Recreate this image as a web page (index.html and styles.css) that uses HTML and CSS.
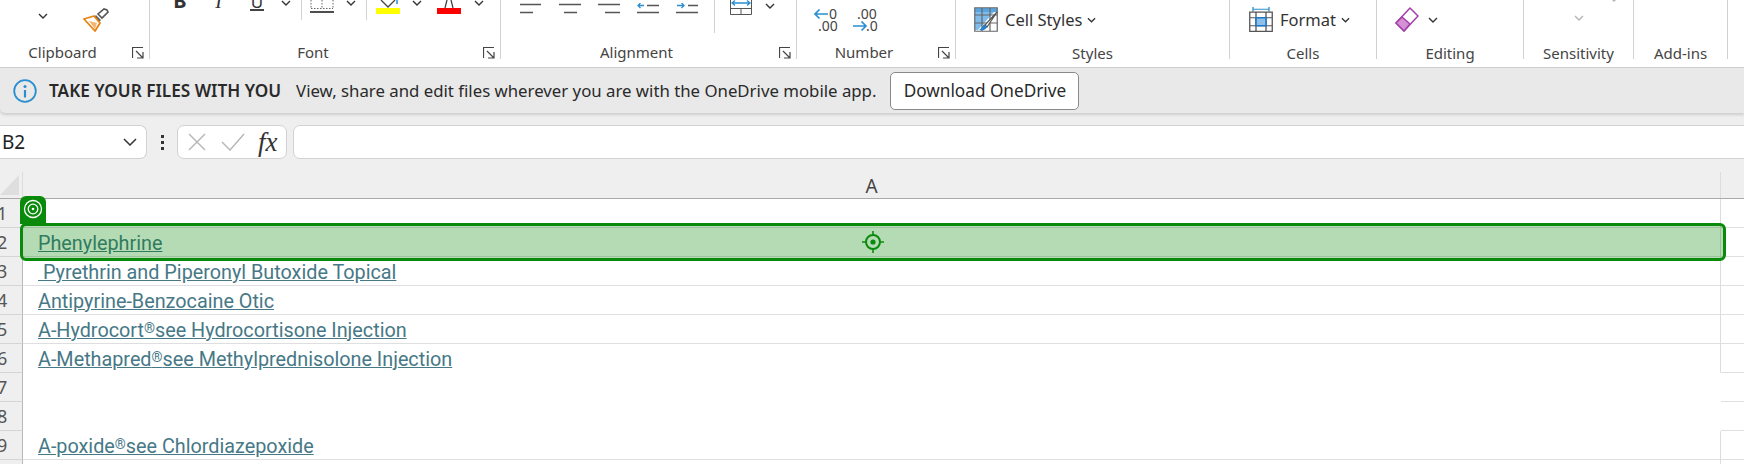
FILE: index.html
```html
<!DOCTYPE html>
<html lang="en">
<head>
    <meta charset="UTF-8">
    <title>Book1 - Excel</title>
    <link rel="stylesheet" href="styles.css">
</head>
<body>
<div class="ribbon">
    <div class="group clipboard">
        <div class="tools">
            <svg class="chev" viewBox="0 0 10 6"><path d="M1 1l4 4 4-4"/></svg>
            <svg class="brush" viewBox="0 0 26 24">
                <path d="M15 6l4 4 6-6-1-2-3-1z" fill="#fff" stroke="#555" stroke-width="1.6"/>
                <path d="M13 7l5 5-2 2-5-5z" fill="#666"/>
                <path d="M1 11l10-3 6 7-5 8z" fill="#fff" stroke="#e8830f" stroke-width="1.8" stroke-linejoin="round"/>
                <path d="M6 13l8 2-2 6z" fill="#f3b56f"/>
            </svg>
        </div>
        <div class="label-row"><span class="label">Clipboard</span><span class="launch"><svg viewBox="0 0 12 12"><path d="M.5 11V.5H11M4 4l7 7M11 5v6H5"/></svg></span></div>
    </div>
    <div class="group font">
        <div class="tools">
            <span class="cut bold">B</span>
            <span class="cut ital">I</span>
            <span class="cut under">U</span>
            <svg class="chev up" viewBox="0 0 10 6"><path d="M1 1l4 4 4-4"/></svg>
            <i class="sep"></i>
            <svg class="borders" viewBox="0 0 24 14"><path d="M1 0v9M23 0v9M1 8.500h22M12 0v9" stroke="#666" stroke-dasharray="1.500 1.500" fill="none"/><path d="M0 12h24" stroke="#222" stroke-width="1.600"/></svg>
            <svg class="chev up" viewBox="0 0 10 6"><path d="M1 1l4 4 4-4"/></svg>
            <i class="sep"></i>
            <span class="swatch yellow"><svg viewBox="0 0 24 8"><path d="M5 0l7 7 7-7" fill="none" stroke="#444" stroke-width="1.300"/><path d="M21 0v4" stroke="#2a8ed0" stroke-width="1.500"/></svg></span>
            <svg class="chev up" viewBox="0 0 10 6"><path d="M1 1l4 4 4-4"/></svg>
            <span class="swatch red"><svg viewBox="0 0 24 8"><path d="M8 8l2-8M16 8l-2-8" fill="none" stroke="#444" stroke-width="1.300"/></svg></span>
            <svg class="chev up" viewBox="0 0 10 6"><path d="M1 1l4 4 4-4"/></svg>
        </div>
        <div class="label-row"><span class="label">Font</span><span class="launch"><svg viewBox="0 0 12 12"><path d="M.5 11V.5H11M4 4l7 7M11 5v6H5"/></svg></span></div>
    </div>
    <div class="group alignment">
        <div class="tools">
            <svg class="lines" viewBox="0 0 22 11"><path d="M0 1.500h21M0 9.500h13"/></svg>
            <svg class="lines" viewBox="0 0 22 11"><path d="M0 1.500h22M5 9.500h13"/></svg>
            <svg class="lines" viewBox="0 0 22 11"><path d="M0 1.500h22M7 9.500h15"/></svg>
            <svg class="lines" viewBox="0 0 22 11"><path d="M10 2.500h12M0 9.500h22"/><path class="blue" d="M7 2.500H1M3.500 0L1 2.500 3.500 5"/></svg>
            <svg class="lines" viewBox="0 0 22 11"><path d="M12 2.500h10M0 9.500h22"/><path class="blue" d="M1 2.500h7M5.500 0L8 2.500 5.500 5"/></svg>
            <i class="sep tall"></i>
            <svg class="merge" viewBox="0 0 22 15"><path d="M.5 0v14.500h21V0M.5 8.500h21M11 8.500v6" fill="none" stroke="#555"/><path d="M2 3h18M5 .5L2 3l3 2.500M17 .5L20 3l-3 2.500" fill="none" stroke="#2a8ed0" stroke-width="1.300"/></svg>
            <svg class="chev up" viewBox="0 0 10 6"><path d="M1 1l4 4 4-4"/></svg>
        </div>
        <div class="label-row"><span class="label">Alignment</span><span class="launch"><svg viewBox="0 0 12 12"><path d="M.5 11V.5H11M4 4l7 7M11 5v6H5"/></svg></span></div>
    </div>
    <div class="group number">
        <div class="tools">
            <svg class="dec" viewBox="0 0 26 26"><path d="M15 6H2M6.500 1.500L2 6l4.500 4.500" fill="none" stroke="#2a8ed0" stroke-width="1.700"/><text x="16" y="10.500">0</text><text x="5" y="23">.00</text></svg>
            <svg class="dec" viewBox="0 0 26 26"><text x="4" y="10.500">.00</text><path d="M0 18h13M8.500 13.500L13 18l-4.500 4.500" fill="none" stroke="#2a8ed0" stroke-width="1.700"/><text x="13" y="23">.0</text></svg>
        </div>
        <div class="label-row"><span class="label">Number</span><span class="launch"><svg viewBox="0 0 12 12"><path d="M.5 11V.5H11M4 4l7 7M11 5v6H5"/></svg></span></div>
    </div>
    <div class="group styles">
        <div class="tools">
            <svg class="big" viewBox="0 0 24 25">
                <path d="M1 1h22v4H1z" fill="#5aa5e0"/>
                <path d="M1 5h19L4 23H1z" fill="#7fbcec"/>
                <path d="M.75.75h22.500v23.500H.75zM1 8h22M1 16h22M8 1v23M16 1v23" fill="none" stroke="#666" stroke-width="1.200"/>
                <path d="M23 5L11 18l2 2z" fill="#fff" stroke="#555" stroke-width="1.200"/>
                <path d="M10 17l3 3c-1 3-5 4-8 3 2-1 3-3 5-6z" fill="#2a80c8"/>
            </svg>
            <span class="tool-text">Cell Styles</span>
            <svg class="chev small" viewBox="0 0 10 6"><path d="M1 1l4 4 4-4"/></svg>
        </div>
        <div class="label-row"><span class="label wide">Styles</span></div>
    </div>
    <div class="group cells">
        <div class="tools">
            <svg class="big" viewBox="0 0 24 28" preserveAspectRatio="none">
                <path d="M4 2.500h16M4 0v5M20 0v5" fill="none" stroke="#2a8ed0" stroke-width="1.300"/>
                <path d="M.75 5.750h22.500v21.500H.75zM1 12h22M1 21h22M7 6v21M17 6v21" fill="none" stroke="#555" stroke-width="1.300"/>
                <path d="M7 12h10v9H7z" fill="#8ec0ea" stroke="#1f78c1" stroke-width="1.600"/>
            </svg>
            <span class="tool-text">Format</span>
            <svg class="chev small" viewBox="0 0 10 6"><path d="M1 1l4 4 4-4"/></svg>
        </div>
        <div class="label-row"><span class="label wide">Cells</span></div>
    </div>
    <div class="group editing">
        <div class="tools">
            <svg class="big" viewBox="0 0 24 25">
                <path d="M1 16L15 1l8 8L9 24z" fill="#fff" stroke="#a33ea8" stroke-width="1.500" stroke-linejoin="round"/>
                <path d="M1 16l6-6 8 7-6 7z" fill="#d491d6" stroke="#a33ea8" stroke-width="1.500" stroke-linejoin="round"/>
            </svg>
            <svg class="chev dark" viewBox="0 0 10 6"><path d="M1 1l4 4 4-4"/></svg>
        </div>
        <div class="label-row"><span class="label wide">Editing</span></div>
    </div>
    <div class="group sensitivity">
        <div class="tools">
            <svg class="chev grey" viewBox="0 0 10 6"><path d="M1 1l4 4 4-4"/></svg>
            <svg class="chev grey top" viewBox="0 0 10 6"><path d="M1 1l4 4 4-4"/></svg>
        </div>
        <div class="label-row"><span class="label wide">Sensitivity</span></div>
    </div>
    <div class="group addins">
        <div class="tools"></div>
        <div class="label-row"><span class="label wide">Add-ins</span></div>
    </div>
</div>

<div class="notice">
    <svg class="info" viewBox="0 0 24 24"><circle cx="12" cy="12" r="10.800" fill="none" stroke="#2a8ed0" stroke-width="1.800"/><circle cx="12" cy="7.500" r="1.500" fill="#2a8ed0"/><path d="M12 11v7.500" stroke="#2a8ed0" stroke-width="2.200"/></svg>
    <b class="notice-title">TAKE YOUR FILES WITH YOU</b>
    <span class="notice-text">View, share and edit files wherever you are with the OneDrive mobile app.</span>
    <span class="notice-btn">Download OneDrive</span>
</div>

<div class="formula">
    <div class="namebox">
        <span>B2</span>
        <svg viewBox="0 0 14 8"><path d="M1 1l6 6 6-6"/></svg>
    </div>
    <span class="dots"><i></i><i></i><i></i></span>
    <div class="fxbox">
        <svg class="cancel" viewBox="0 0 18 18"><path d="M1 1l16 16M17 1L1 17"/></svg>
        <svg class="enter" viewBox="0 0 24 18"><path d="M1 9l8 8L23 1"/></svg>
        <span class="fx">fx</span>
    </div>
    <div class="input"></div>
</div>

<div class="col-head">
    <div class="corner"><i></i></div>
    <div class="col-a">A</div>
    <div class="col-rest"></div>
</div>

<div class="sheet">
    <div class="row"><div class="num">1</div><div class="cell"></div><div class="rest"></div></div>
    <div class="row"><div class="num">2</div><div class="cell"><a>Phenylephrine</a></div><div class="rest"></div></div>
    <div class="row"><div class="num">3</div><div class="cell"><a> Pyrethrin and Piperonyl Butoxide Topical</a></div><div class="rest"></div></div>
    <div class="row"><div class="num">4</div><div class="cell"><a>Antipyrine-Benzocaine Otic</a></div><div class="rest"></div></div>
    <div class="row"><div class="num">5</div><div class="cell"><a>A-Hydrocort<span class="reg">®</span>see Hydrocortisone Injection</a></div><div class="rest"></div></div>
    <div class="row"><div class="num">6</div><div class="cell open-bottom"><a>A-Methapred<span class="reg">®</span>see Methylprednisolone Injection</a></div><div class="rest"></div></div>
    <div class="row"><div class="num">7</div><div class="cell open-bottom open-right"></div><div class="rest"></div></div>
    <div class="row"><div class="num">8</div><div class="cell open-bottom open-right"></div><div class="rest"></div></div>
    <div class="row"><div class="num">9</div><div class="cell"><a>A-poxide<span class="reg">®</span>see Chlordiazepoxide</a></div><div class="rest"></div></div>
    <div class="row"><div class="num">10</div><div class="cell"></div><div class="rest"></div></div>

    <!-- focus cell overlay -->
    <div class="focus">
        <svg class="target" viewBox="0 0 22 22"><circle cx="11" cy="11" r="7" fill="none" stroke="#0a8a0a" stroke-width="2"/><circle cx="11" cy="11" r="2.600" fill="#0a8a0a"/><path d="M11 0v4M11 18v4M0 11h4M18 11h4" stroke="#0a8a0a" stroke-width="1.600"/></svg>
    </div>
    <div class="focus-tab">
        <svg viewBox="0 0 20 20"><circle cx="10" cy="10" r="8.500" fill="none" stroke="#fff" stroke-width="1.300"/><circle cx="10" cy="10" r="4.800" fill="none" stroke="#fff" stroke-width="1.300"/><circle cx="10" cy="10" r="1.300" fill="#fff"/></svg>
    </div>
</div>
</body>
</html>
```

FILE: styles.css
```css
* {
    margin: 0;
    padding: 0;
    box-sizing: border-box;
}

html, body {
    height: 100%;
    overflow: hidden;
}

body {
    background-color: #efefef;
    font-family: "Noto Sans", sans-serif;
    color: #333;
}

svg {
    display: block;
    flex: none;
}

/* ribbon */
.ribbon {
    height: 68px;
    display: flex;
    background-color: #fff;
    border-bottom: 1px solid #d0d0d0;
}

.group {
    height: 59px;
    display: flex;
    flex-direction: column;
    flex: none;
    border-right: 1px solid #d2d2d2;
}

.tools {
    height: 42px;
    flex: none;
}

.label-row {
    height: 22px;
    display: flex;
    flex: none;
}

.label {
    flex: 1;
    text-align: center;
    font-size: 15px;
    line-height: 20px;
    color: #444;
}

.label.wide {
    line-height: 23px;
}

.launch {
    width: 24px;
    padding: 5px 5px 0 7px;
}

.launch svg {
    width: 12px;
    height: 12px;
    fill: none;
    stroke: #444;
    stroke-width: 1.200;
}

.chev {
    width: 10px;
    height: 6px;
    fill: none;
    stroke: #333;
    stroke-width: 1.400;
}

.chev.up {
    justify-self: center;
    margin-top: 0;
}

.chev.small {
    width: 9px;
    height: 6px;
    margin-left: 5px;
}

.chev.grey {
    stroke: #b5b5b5;
}

.sep {
    display: block;
    justify-self: center;
    width: 1px;
    height: 20px;
    background-color: #d2d2d2;
}

.sep.tall {
    height: 33px;
}

.clipboard {
    width: 150px;
}

.clipboard .tools {
    display: flex;
    padding: 8px 0 0 38px;
    gap: 35px;
}

.clipboard .chev {
    margin-top: 5px;
}

.brush {
    width: 26px;
    height: 24px;
}

.font {
    width: 351px;
}

.font .tools {
    display: grid;
    grid-template-columns: 38px 39px 38px 20px 10px 32px 26px 4px 40px 17px 48px 12px;
    align-items: start;
    padding-left: 11px;
}

.cut {
    height: 11px;
    overflow: hidden;
    display: flex;
    justify-content: center;
    align-items: flex-end;
    font-family: "Liberation Serif", serif;
    font-size: 20px;
    line-height: 14px;
    color: #333;
}

.cut.bold {
    font-family: "Noto Sans", sans-serif;
    font-weight: 700;
    height: 8px;
}

.cut.ital {
    font-style: italic;
    height: 8px;
}

.cut.under {
    font-family: "Noto Sans", sans-serif;
    font-size: 17px;
    border-bottom: 2px solid #444;
    width: 14px;
    justify-self: center;
}

.borders {
    width: 24px;
    height: 14px;
    justify-self: center;
}

.swatch {
    display: block;
    width: 24px;
    height: 14px;
    justify-self: center;
    border-bottom: 6px solid #ff0;
}

.swatch.red {
    border-bottom-color: #f00;
}

.swatch svg {
    width: 24px;
    height: 8px;
}

.alignment {
    width: 296px;
}

.alignment .tools {
    display: flex;
    align-items: flex-start;
    gap: 17px;
    padding: 3px 0 0 19px;
}

.lines {
    width: 22px;
    height: 11px;
    fill: none;
    stroke: #555;
    stroke-width: 1.300;
}

.lines .blue {
    stroke: #2a8ed0;
}

.alignment .sep {
    margin: -3px 0 0 -1px;
}

.merge {
    width: 22px;
    height: 15px;
    margin: -3px 0 0 -2px;
}

.alignment .chev {
    margin-left: -4px;
}

.number {
    width: 159px;
}

.number .tools {
    display: flex;
    gap: 14px;
    padding: 8px 0 0 16px;
}

.dec {
    width: 26px;
    height: 26px;
}

.dec text {
    font-family: "Noto Sans", sans-serif;
    font-size: 14px;
    fill: #444;
}

.styles {
    width: 274px;
}

.styles .tools,
.cells .tools,
.editing .tools {
    display: flex;
    align-items: center;
    height: 42px;
    padding-bottom: 3px;
}

.styles .tools {
    padding-left: 18px;
}

.cells .tools {
    padding-left: 19px;
}

.editing .tools {
    padding-left: 18px;
}

.big {
    width: 24px;
    height: 25px;
}

.tool-text {
    margin-left: 7px;
    font-size: 16.500px;
    color: #333;
}

.cells {
    width: 147px;
}

.editing {
    width: 147px;
}

.editing .chev {
    margin-left: 9px;
}

.sensitivity {
    width: 110px;
}

.sensitivity .tools {
    display: flex;
    align-items: flex-start;
    gap: 25px;
    padding: 15px 0 0 50px;
}

.chev.top {
    margin-top: -19px;
}

.addins {
    width: 94px;
}

/* onedrive notice */
.notice {
    height: 45px;
    display: flex;
    align-items: center;
    padding-left: 13px;
    background-color: #e9e9e9;
    border-radius: 0 0 0 5px;
    box-shadow: 0 2px 3px rgba(0, 0, 0, 0.14);
    position: relative;
    font-size: 16.800px;
    color: #2a2a2a;
}

.info {
    width: 24px;
    height: 24px;
}

.notice-title {
    margin-left: 12px;
    font-size: 17.200px;
    font-weight: 600;
}

.notice-text {
    margin-left: 15px;
}

.notice-btn {
    margin-left: 14px;
    width: 189px;
    height: 38px;
    line-height: 35px;
    text-align: center;
    font-size: 17.200px;
    background-color: #fff;
    border: 1px solid #8a8a8a;
    border-radius: 5px;
}

/* formula bar */
.formula {
    display: flex;
    align-items: center;
    height: 59px;
    padding-top: 12px;
    padding-bottom: 13px;
}

.namebox {
    width: 147px;
    height: 34px;
    display: flex;
    align-items: center;
    justify-content: space-between;
    padding: 0 9px 0 2px;
    background-color: #fff;
    border: 1px solid #d2d2d2;
    border-left: none;
    border-radius: 0 7px 7px 0;
    font-size: 19px;
    color: #222;
}

.namebox svg {
    width: 14px;
    height: 8px;
    fill: none;
    stroke: #333;
    stroke-width: 1.500;
}

.dots {
    width: 30px;
    display: flex;
    flex-direction: column;
    align-items: center;
    gap: 3px;
}

.dots i {
    display: block;
    width: 3px;
    height: 3px;
    background-color: #333;
}

.fxbox {
    width: 110px;
    height: 34px;
    display: flex;
    align-items: center;
    padding-left: 10px;
    background-color: #fff;
    border: 1px solid #d2d2d2;
    border-radius: 7px;
}

.cancel {
    width: 18px;
    height: 18px;
    fill: none;
    stroke: #b8b8b8;
    stroke-width: 1.500;
}

.enter {
    width: 24px;
    height: 18px;
    margin-left: 15px;
    fill: none;
    stroke: #b8b8b8;
    stroke-width: 1.500;
}

.fx {
    margin-left: 13px;
    font-family: "Liberation Serif", serif;
    font-style: italic;
    font-size: 27px;
    line-height: 24px;
    color: #333;
}

.input {
    flex: 1;
    height: 34px;
    margin-left: 6px;
    margin-right: -10px;
    background-color: #fff;
    border: 1px solid #d2d2d2;
    border-radius: 7px;
}

/* column header */
.col-head {
    height: 27px;
    display: flex;
    border-bottom: 1px solid #aaa;
}

.corner {
    width: 23px;
    padding-top: 3px;
    border-right: 1px solid #dcdcdc;
}

.corner i {
    display: block;
    width: 19px;
    height: 20px;
    background-color: #dedede;
    clip-path: polygon(100% 0, 100% 100%, 0 100%);
}

.col-a {
    width: 1698px;
    text-align: center;
    font-size: 19px;
    line-height: 29px;
    color: #444;
    border-right: 1px solid #dcdcdc;
}

.col-rest {
    flex: 1;
}

/* grid */
.sheet {
    position: relative;
}

.row {
    height: 29px;
    display: flex;
    background-color: #fff;
}

.num {
    width: 23px;
    overflow: hidden;
    text-indent: -3px;
    font-size: 18px;
    line-height: 29px;
    color: #555;
    background-color: #efefef;
    border-right: 1px solid #b8b8b8;
    border-bottom: 1px solid #d5d5d5;
}

.cell {
    width: 1698px;
    padding-left: 15px;
    border-right: 1px solid #dcdcdc;
    border-bottom: 1px solid #dfdfdf;
    font-family: Roboto, sans-serif;
    font-size: 19.800px;
    line-height: 31px;
    white-space: pre;
}

.cell.open-bottom {
    border-bottom-color: #fff;
}

.cell.open-right {
    border-right-color: #fff;
}

.cell a {
    color: #467886;
    text-decoration: underline;
}

.reg {
    font-size: 14px;
    line-height: 0;
    vertical-align: 4px;
}

.rest {
    flex: 1;
    border-bottom: 1px solid #dfdfdf;
}

.focus {
    position: absolute;
    left: 20px;
    top: 24px;
    width: 1706px;
    height: 38px;
    display: flex;
    align-items: center;
    justify-content: center;
    background-color: rgba(0, 130, 0, 0.29);
    border: 3px solid #0a8a0a;
    border-radius: 6px;
}

.target {
    width: 22px;
    height: 22px;
}

.focus-tab {
    position: absolute;
    left: 20px;
    top: -3px;
    width: 26px;
    height: 28px;
    padding: 3px;
    background-color: #0a8a0a;
    border-radius: 6px 6px 0 0;
}

.focus-tab svg {
    width: 20px;
    height: 20px;
}
```
